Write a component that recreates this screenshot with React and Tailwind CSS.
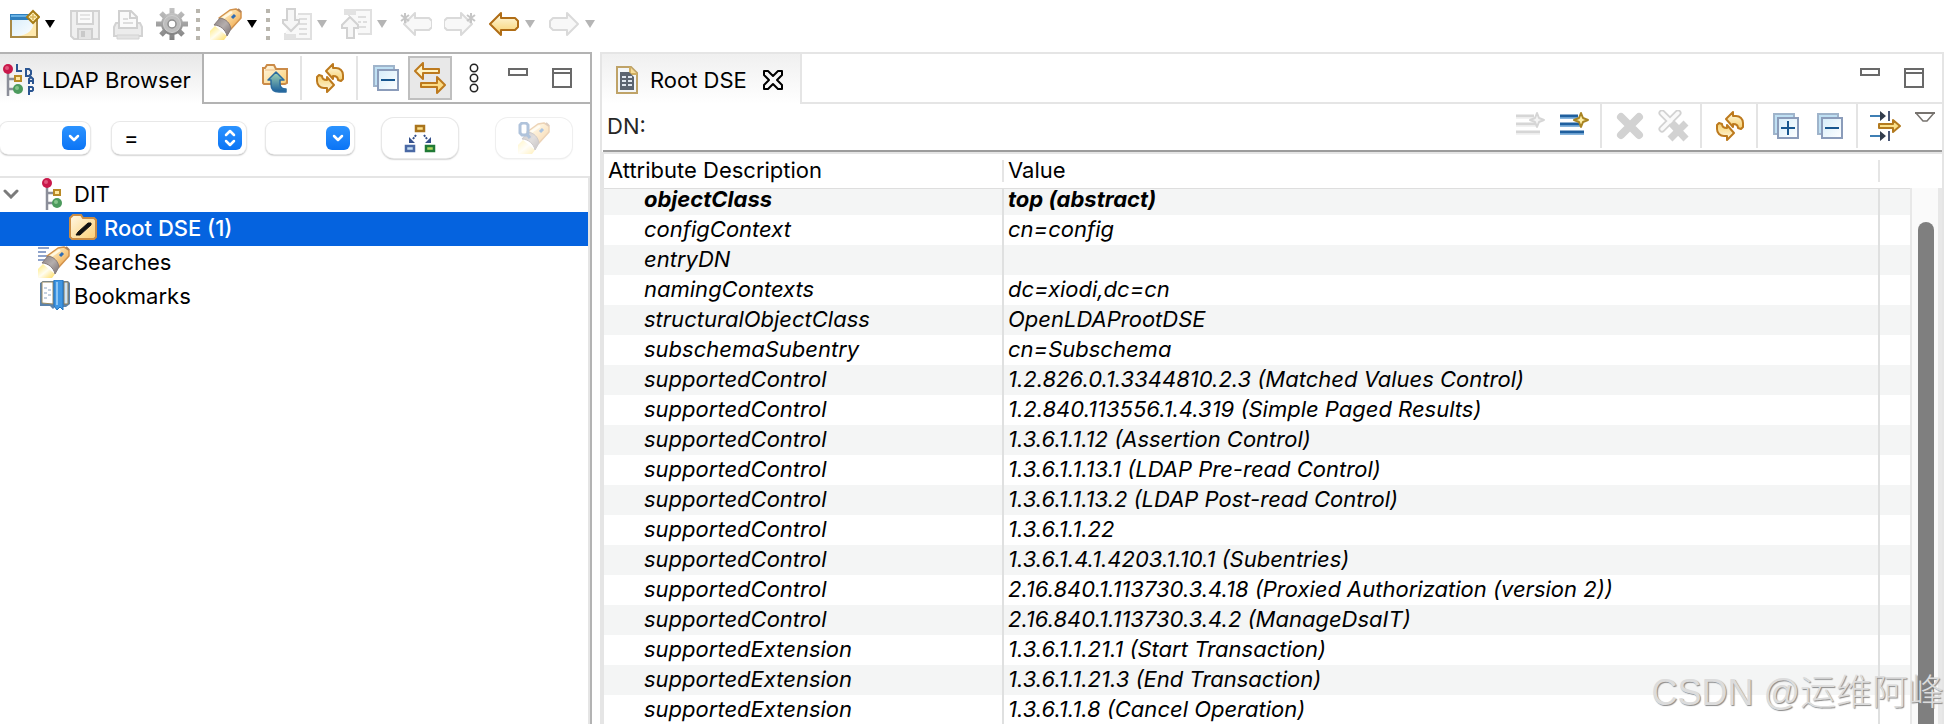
import React, { useState } from 'react';

const treeItems = [
  { id: 'dit', label: 'DIT', level: 0, open: true },
  { id: 'root', label: 'Root DSE (1)', level: 1 },
  { id: 'searches', label: 'Searches', level: 0 },
  { id: 'bookmarks', label: 'Bookmarks', level: 0 },
];

const attributes = [
  ['configContext', 'cn=config'],
  ['entryDN', ''],
  ['namingContexts', 'dc=xiodi,dc=cn'],
  ['structuralObjectClass', 'OpenLDAProotDSE'],
  ['subschemaSubentry', 'cn=Subschema'],
  ['supportedControl', '1.2.826.0.1.3344810.2.3 (Matched Values Control)'],
  ['supportedControl', '1.2.840.113556.1.4.319 (Simple Paged Results)'],
  ['supportedControl', '1.3.6.1.1.12 (Assertion Control)'],
  ['supportedControl', '1.3.6.1.1.13.1 (LDAP Pre-read Control)'],
  ['supportedControl', '1.3.6.1.1.13.2 (LDAP Post-read Control)'],
  ['supportedControl', '1.3.6.1.1.22'],
  ['supportedControl', '1.3.6.1.4.1.4203.1.10.1 (Subentries)'],
  ['supportedControl', '2.16.840.1.113730.3.4.18 (Proxied Authorization (version 2))'],
  ['supportedControl', '2.16.840.1.113730.3.4.2 (ManageDsaIT)'],
  ['supportedExtension', '1.3.6.1.1.21.1 (Start Transaction)'],
  ['supportedExtension', '1.3.6.1.1.21.3 (End Transaction)'],
  ['supportedExtension', '1.3.6.1.1.8 (Cancel Operation)'],
];

const Icon = ({ children, className = '' }) => (
  <svg viewBox="0 0 32 32" fill="none" className={`w-8 h-8 shrink-0 ${className}`} aria-hidden="true">
    {children}
  </svg>
);

// gradients shared by all the icons
const Gradients = () => (
  <svg className="absolute w-0 h-0" aria-hidden="true">
    <defs>
      <linearGradient id="gold" x1="0" y1="0" x2="0" y2="1">
        <stop offset="0" stopColor="#fffbe6" />
        <stop offset="1" stopColor="#f7cf6b" />
      </linearGradient>
      <linearGradient id="body" x1="0" y1="0" x2="1" y2="1">
        <stop offset="0.2" stopColor="#fff0c4" />
        <stop offset="0.9" stopColor="#f0a94e" />
      </linearGradient>
      <linearGradient id="beam" x1="0" y1="0" x2="1" y2="1">
        <stop offset="0" stopColor="#ffe873" />
        <stop offset="0.5" stopColor="#fffdf0" />
        <stop offset="1" stopColor="#ffdb5c" />
      </linearGradient>
      <linearGradient id="collar" x1="0" y1="0" x2="1" y2="1">
        <stop offset="0" stopColor="#8b8283" />
        <stop offset="0.5" stopColor="#b5aead" />
        <stop offset="1" stopColor="#766c6d" />
      </linearGradient>
      <linearGradient id="folder" x1="0" y1="0" x2="1" y2="1">
        <stop offset="0" stopColor="#fff8e6" />
        <stop offset="1" stopColor="#fbcf74" />
      </linearGradient>
      <linearGradient id="gray" x1="0" y1="0" x2="0" y2="1">
        <stop offset="0" stopColor="#c4c4c4" />
        <stop offset="1" stopColor="#808080" />
      </linearGradient>
      <linearGradient id="pane" x1="0" y1="0" x2="1" y2="1">
        <stop offset="0" stopColor="#d5ecfa" />
        <stop offset="1" stopColor="#ffffff" />
      </linearGradient>
      <linearGradient id="arrow" x1="0" y1="0" x2="0" y2="1">
        <stop offset="0" stopColor="#a5d8b4" />
        <stop offset="1" stopColor="#1a5f9c" />
      </linearGradient>
    </defs>
  </svg>
);

const NewIcon = () => (
  <Icon>
    <path d="M3 7h26v22H3z" fill="url(#pane)" stroke="#a98a45" strokeWidth="2" />
    <path d="M2 6h22v6H2z" fill="#2f7fbd" />
    <path d="M3 7h19v2H3z" fill="#67b1e4" />
    <path d="M10 28c10-1 15-6 16-14l2 1v13z" fill="#ffe9ae" />
    <path d="M25 3l6 6-6 6-6-6z" fill="#fff1b8" stroke="#a77d17" strokeWidth="2" />
    <path d="M25 6v6M22 9h6" stroke="#d9b45a" strokeWidth="1.5" />
  </Icon>
);

const SaveIcon = () => (
  <Icon>
    <path d="M3 3h28v28H6l-3-3z" fill="#f0f0f0" stroke="#d3d3d3" strokeWidth="2" />
    <path d="M9 3h16v13H9z" fill="#fafafa" stroke="#d3d3d3" strokeWidth="2" />
    <path d="M12 7h10M12 11h10" stroke="#dddddd" strokeWidth="1.5" />
    <path d="M10 31V21h14v10" fill="#e4e4e4" stroke="#cfcfcf" strokeWidth="2" />
    <path d="M13 23h4v6h-4z" fill="#c9c9c9" />
  </Icon>
);

const PrintIcon = () => (
  <Icon>
    <path d="M4 15h4v4h16v-4h4l2 4v9H2v-9z" fill="#ececec" stroke="#d3d3d3" strokeWidth="2" />
    <path d="M7 3h12l6 6v11H7z" fill="#fafafa" stroke="#d0d0d0" strokeWidth="2" />
    <path d="M18 3v7h7" stroke="#d0d0d0" strokeWidth="2" />
    <path d="M11 11h5M11 15h10" stroke="#dddddd" strokeWidth="2" />
    <path d="M5 27h22v4H5z" fill="#e3e3e3" stroke="#d3d3d3" />
  </Icon>
);

const GearIcon = () => (
  <Icon>
    <g stroke="url(#gray)" strokeWidth="5">
      <path d="M16.01 0l-.02 32M0 15.99l32 .02M5 5l22 22M27 5L5 27" />
    </g>
    <circle cx="16" cy="16" r="11" fill="url(#gray)" />
    <circle cx="16" cy="16" r="8.5" fill="#bdbdbd" stroke="#cfcfcf" />
    <circle cx="16" cy="16" r="4" fill="#fff" stroke="#8e8e8e" strokeWidth="1.5" />
  </Icon>
);

const TorchShape = () => (
  <>
    <path d="M0 23l5-5 12 10-3 4H0z" fill="url(#beam)" />
    <path d="M9 10L20 2l6-1 5 3v6l-10 11z" fill="url(#body)" stroke="#d2924c" strokeWidth="1.5" strokeLinejoin="round" />
    <path d="M13 10l9-6" stroke="#fff8e2" strokeWidth="2.5" />
    <path d="M28 1l3 3" stroke="#a98262" strokeWidth="2" />
    <path d="M4 17l6-7c6 1 10 5 11 11l-4 7c-1-6-7-11-13-11z" fill="url(#collar)" stroke="#857b7b" strokeLinejoin="round" />
    <path d="M22 10l3-3" stroke="#2f6db5" strokeWidth="3" />
  </>
);

const ImportIcon = ({ up }) => (
  <Icon>
    <path d={up ? 'M9 2h22v24H18M9 2v6' : 'M18 6h13v25H5v-6'} fill="#f8f8f8" stroke="#e0e0e0" strokeWidth="2" />
    <path d={up ? 'M4 1h12v6H4z' : 'M4 26h12v5H4z'} fill="#e2e2e2" />
    <path
      d={up ? 'M18 9h8M18 14h3M23 14h4M18 19h8' : 'M19 11h8M19 16h8M19 21h8M19 26h8'}
      stroke="#dedede"
      strokeWidth="2"
    />
    <path
      d={up ? 'M10 9l8 8v3h-4v10H7V20H2v-3z' : 'M7 1h8v11h4v3l-8 8-8-8v-3h4z'}
      fill="#f6f6f6"
      stroke="#d2d2d2"
      strokeWidth="2"
    />
  </Icon>
);

const ArrowIcon = ({ right, gold, star }) => (
  <Icon>
    <g transform={right ? 'translate(32 0) scale(-1 1)' : undefined}>
      <path
        d="M2 16L13 5v5h14l3 3v6l-3 3H13v5z"
        fill={gold ? 'url(#gold)' : '#f8f8f8'}
        stroke={gold ? '#b06d16' : '#dadada'}
        strokeWidth="2"
        strokeLinejoin="round"
        className={star ? 'translate-x-[2px]' : ''}
      />
      {star && <path d="M5 5v10M1 7l8 6M9 7l-8 6" stroke="#c6c6c6" strokeWidth="2" />}
    </g>
  </Icon>
);

const Caret = ({ dim }) => (
  <svg viewBox="0 0 12 8" className={`w-3 h-2 ml-1 ${dim ? 'fill-[#b5b5b5]' : 'fill-black'}`} aria-hidden="true">
    <path d="M1 0h10L6 8z" />
  </svg>
);

const Grip = () => (
  <span className="flex flex-col gap-[5px] w-1 -ml-1 -mr-0.5">
    <span className="size-1 bg-[#b9b6ae]" />
    <span className="size-1 bg-[#b9b6ae]" />
    <span className="size-1 bg-[#b9b6ae]" />
    <span className="size-1 bg-[#b9b6ae]" />
  </span>
);

const FolderUpIcon = () => (
  <Icon>
    <path d="M5 21V6h2l2-3h7l2 4h11v14l-2 1H6z" fill="url(#folder)" stroke="#cb8b48" strokeWidth="2" />
    <path d="M7 8h10" stroke="#f3cfa0" strokeWidth="1.5" />
    <path
      d="M18 10l8 8h-4v4c0 3 2 5 6 5v3h-7c-5 0-8-3-8-8v-4h-3z"
      fill="url(#arrow)"
      stroke="#2b6ca0"
      strokeWidth="1.5"
      strokeLinejoin="round"
    />
  </Icon>
);

const RefreshShape = () => (
  <path
    d="M12 9l7-7v4h3c4 0 7 3 7 7v4l-2 2-3-1c0-3-2-4-5-4v3z"
    fill="url(#gold)"
    stroke="#bd7a1e"
    strokeWidth="2"
    strokeLinejoin="round"
  />
);

const RefreshIcon = () => (
  <Icon>
    <RefreshShape />
    <g transform="rotate(180 16 16)">
      <RefreshShape />
    </g>
  </Icon>
);

const BoxesIcon = ({ plus }) => (
  <Icon>
    <path d="M4 4h20v20H4z" fill="#bfe0f3" stroke="#9fb4cb" strokeWidth="2" />
    <path d="M8 8h20v20H8z" fill="url(#pane)" stroke="#8b9cba" strokeWidth="2" />
    <path d={plus ? 'M11 18h14M18 11v14' : 'M11 18h14'} stroke="#17568f" strokeWidth="2" />
  </Icon>
);

const LinkIcon = () => (
  <Icon>
    <path d="M1 9l8-8v6h16v4H9v6z" fill="#fff3c4" stroke="#bd7a1e" strokeWidth="2" strokeLinejoin="round" />
    <path d="M31 23l-8-8v6H7v4h16v6z" fill="#fbdc86" stroke="#bd7a1e" strokeWidth="2" strokeLinejoin="round" />
  </Icon>
);

const DotsIcon = () => (
  <Icon>
    <g stroke="#222" strokeWidth="1.5">
      <circle cx="16" cy="6" r="3.7" />
      <circle cx="16" cy="16" r="3.7" />
      <circle cx="16" cy="26" r="3.7" />
    </g>
  </Icon>
);

const MinIcon = () => (
  <Icon>
    <path d="M7 7h18v6H7z" stroke="#696969" strokeWidth="2" />
  </Icon>
);

const MaxIcon = () => (
  <Icon>
    <path d="M7 7h18v18H7zM7 11h18" stroke="#696969" strokeWidth="2" />
  </Icon>
);

const DitShape = () => (
  <>
    <path d="M6 6v26M6 15h10M6 25h10" stroke="#8b8e99" strokeWidth="2.5" />
    <circle cx="6" cy="5" r="5" fill="#c9184a" />
    <circle cx="5" cy="4" r="2" fill="#e0577c" />
    <path d="M13 12h6v5h-6z" fill="#ffe9a0" stroke="#b98a26" strokeWidth="2" />
    <circle cx="16" cy="25" r="5" fill="#4c9a5d" />
    <circle cx="15" cy="24" r="2" fill="#86c48c" />
  </>
);

const LdapIcon = () => (
  <Icon>
    <DitShape />
    <g stroke="#2b5591" strokeWidth="2">
      <path d="M15 0v7h5M24 5h3l2 2v3l-2 2h-3zM27 20v-5l2-2 2 2v5M27 17h4M27 31v-8h3l1 1v2l-1 1h-3" />
    </g>
  </Icon>
);

const DitIcon = () => (
  <Icon>
    <g transform="translate(3 0)">
      <DitShape />
    </g>
  </Icon>
);

const EntryIcon = () => (
  <Icon>
    <path d="M2 25V6l3-3h8l2 3h11l2 2v17l-2 2H4z" fill="url(#folder)" stroke="#c98c45" strokeWidth="2" />
    <path d="M8 23l2-3L20 11h3v2L12 23z" fill="#111" stroke="#111" />
  </Icon>
);

const SearchesIcon = () => (
  <Icon>
    <path d="M0 2h11M0 6h8M0 10h11M0 14h7" stroke="#8fa3cb" strokeWidth="2" />
    <TorchShape />
  </Icon>
);

const BookmarksIcon = () => (
  <Icon>
    <path d="M2 3l3-2h25l2 2v21l-4 3H17l-2 2-3-3H2z" fill="#5c83ab" />
    <path d="M4 2h11v22L4 23z" fill="#fff" stroke="#9b8b62" />
    <path d="M26 2h4v22h-4z" fill="#cfe4f4" stroke="#8a7a55" />
    <path d="M6 8h3M10 10h3M6 13h3M10 15h3M6 18h3" stroke="#b3c4d8" strokeWidth="1.5" />
    <path d="M16 0h9v30l-3-3-3 3-3-4z" fill="#3d95e3" stroke="#2273bd" />
    <path d="M19 2v23" stroke="#8cc5f5" strokeWidth="2" />
  </Icon>
);

const HierarchyIcon = () => (
  <Icon>
    <path d="M12 4h8v5h-8z" fill="#ffe08a" stroke="#a9741c" strokeWidth="2.5" />
    <path d="M2 24h8v5H2z" fill="#c3dcf3" stroke="#4a69a5" strokeWidth="2.5" />
    <path d="M22 24h8v5h-8z" fill="#b0d860" stroke="#207a35" strokeWidth="2.5" />
    <path d="M12 13l-3 4M20 13l3 4" stroke="#34508c" strokeWidth="2" strokeDasharray="2 1" />
    <path d="M5 15v6h6zM27 15v6h-6z" fill="#34508c" />
  </Icon>
);

const QuickSearchIcon = () => (
  <Icon className="opacity-40">
    <TorchShape />
    <path d="M4 1h4l2 2v8l-2 2H4l-2-2V3zM8 11l4 5" stroke="#3c6ba8" strokeWidth="3" />
  </Icon>
);

const EditorIcon = () => (
  <Icon className="-mx-[5px]">
    <path d="M6 3h14l6 6v20H6z" fill="#f3f6f8" stroke="#bfa368" strokeWidth="2" />
    <path d="M19 3v7h7" fill="#f7dc97" stroke="#cfae62" strokeWidth="2" />
    <path d="M9 8h9l5 5v13H9z" fill="#5b6470" />
    <path d="M11 13h10M11 17h10M11 21h10" stroke="#dfe6ee" strokeWidth="2" strokeDasharray="4 2" />
  </Icon>
);

const CloseIcon = () => (
  <svg viewBox="0 0 20 20" className="size-5" fill="none" aria-hidden="true">
    <path
      d="M1 1h4l5 5 5-5h4v4l-5 5 5 5v4h-4l-5-5-5 5H1v-4l5-5-5-5z"
      stroke="#000"
      strokeWidth="2"
      strokeLinejoin="round"
    />
  </svg>
);

const LinesIcon = ({ dim }) => (
  <Icon>
    <path d="M2 6h18M2 14h22M2 22h24" stroke={dim ? '#d6d6d6' : '#1f5f9e'} strokeWidth="3" />
    <path d="M2 8h18M2 16h22M2 24h24" stroke={dim ? '#eeeeee' : '#5f9bcf'} strokeWidth="1.5" />
    <path
      d="M23 3l2 5 5 2-5 2-2 5-2-5-5-2 5-2z"
      fill={dim ? '#f4f4f4' : '#fff0a8'}
      stroke={dim ? '#d6d6d6' : '#a98422'}
      strokeWidth="2"
      strokeLinejoin="round"
    />
  </Icon>
);

const DeleteIcon = () => (
  <Icon>
    <path d="M7 7l18 18M25 7L7 25" stroke="#d2d2d2" strokeWidth="8" strokeLinecap="round" />
  </Icon>
);

const DeleteAllIcon = () => (
  <Icon>
    <path d="M4 3l16 16M20 3L4 19" stroke="#d2d2d2" strokeWidth="7" strokeLinecap="round" />
    <path d="M4 3l16 16M20 3L4 19" stroke="#fafafa" strokeWidth="3.5" strokeLinecap="round" />
    <path d="M13 13l15 16M28 13L12 29" stroke="#d2d2d2" strokeWidth="7" />
  </Icon>
);

const FetchIcon = () => (
  <Icon>
    <path d="M0 6h12M0 26h12" stroke="#3f7fb4" strokeWidth="2" />
    <path d="M10 1l6 5-6 5zM10 21l6 5-6 5z" fill="#333d4c" />
    <path d="M19 1v10M19 21v10" stroke="#4b5877" strokeWidth="2" />
    <path d="M9 14h14v-4l7 6-7 6v-4H9z" fill="#fbe08a" stroke="#b37a1f" strokeWidth="2" strokeLinejoin="round" />
  </Icon>
);

const MenuIcon = () => (
  <svg viewBox="0 0 20 12" className="w-5 h-3" fill="none" aria-hidden="true">
    <path d="M1 1h18l-7 8h-4z" stroke="#77736f" strokeWidth="1.5" />
    <path d="M0 1h20" stroke="#77736f" strokeWidth="2" />
  </svg>
);

const ToolButton = ({ label, active, disabled, children }) => (
  <button
    aria-label={label}
    disabled={disabled}
    className={`w-11 h-11 shrink-0 flex items-center justify-center ${
      active ? 'bg-[#e8e8e8] border-2 border-[#bfbfbf]' : ''
    }`}
  >
    {children}
  </button>
);

const Divider = () => <span className="w-0.5 h-11 ml-1 mr-1.5 bg-[#e4e4e4]" />;

const BlueCap = ({ both }) => (
  <svg
    viewBox="0 0 24 24"
    fill="none"
    stroke="#fff"
    strokeWidth="2.5"
    strokeLinecap="round"
    strokeLinejoin="round"
    className="size-6 rounded-md bg-gradient-to-b from-[#2b93ff] to-[#0a74f5]"
    aria-hidden="true"
  >
    <path d={both ? 'M8 9l4-4 4 4M8 15l4 4 4-4' : 'M8 10l4 4 4-4'} />
  </svg>
);

const Combo = ({ label, className }) => (
  <div
    className={`h-8 flex items-center pr-1 rounded-lg bg-white shadow-[0_0_0_1px_#e8e8e8,0_1px_2px_#00000080] ${className}`}
  >
    <input aria-label={label} className="w-full min-w-0 h-6 px-2 outline-none bg-transparent" />
    <button aria-label={`${label} list`}>
      <BlueCap />
    </button>
  </div>
);

const treeIcons = {
  dit: <DitIcon />,
  root: <EntryIcon />,
  searches: <SearchesIcon />,
  bookmarks: <BookmarksIcon />,
};

const MainToolbar = () => (
  <div className="h-[52px] pl-2 pb-1 flex items-center gap-3 shrink-0">
    <button aria-label="New" className="flex items-center"><NewIcon /><Caret /></button>
    <button aria-label="Save" disabled><SaveIcon /></button>
    <button aria-label="Print" disabled><PrintIcon /></button>
    <button aria-label="Settings"><GearIcon /></button>
    <Grip />
    <button aria-label="Search" className="flex items-center"><Icon><TorchShape /></Icon><Caret /></button>
    <Grip />
    <button aria-label="Next annotation" disabled className="flex items-center"><ImportIcon /><Caret dim /></button>
    <button aria-label="Previous annotation" disabled className="flex items-center"><ImportIcon up /><Caret dim /></button>
    <button aria-label="Last edit" disabled><ArrowIcon star /></button>
    <button aria-label="Next edit" disabled><ArrowIcon star right /></button>
    <button aria-label="Back" className="flex items-center"><ArrowIcon gold /><Caret dim /></button>
    <button aria-label="Forward" disabled className="flex items-center"><ArrowIcon right /><Caret dim /></button>
  </div>
);

const BrowserPanel = () => {
  const [selected, setSelected] = useState('root');
  const [operator, setOperator] = useState('=');

  return (
    <section className="w-[592px] shrink-0 flex flex-col border-t-2 border-r-2 border-[#b3b3b3]">
      <div className="h-[50px] flex">
        <h2 className="w-[204px] pl-0.5 pt-0.5 flex items-center gap-2 border-r-2 border-[#b3b3b3] bg-gradient-to-b from-[#e8e8e8] to-white whitespace-nowrap">
          <LdapIcon />
          LDAP Browser
        </h2>
        <div className="flex-1 flex items-center justify-end pr-1.5 border-b-2 border-[#b3b3b3]">
          <ToolButton label="Up to parent"><FolderUpIcon /></ToolButton>
          <Divider />
          <ToolButton label="Refresh"><RefreshIcon /></ToolButton>
          <Divider />
          <ToolButton label="Collapse all"><BoxesIcon /></ToolButton>
          <ToolButton label="Link with editor" active><LinkIcon /></ToolButton>
          <ToolButton label="View menu"><DotsIcon /></ToolButton>
          <ToolButton label="Minimize"><MinIcon /></ToolButton>
          <ToolButton label="Maximize"><MaxIcon /></ToolButton>
        </div>
      </div>

      <div className="h-[72px] pb-1 flex items-center">
        <Combo label="Attribute" className="w-[90px]" />
        <div className="w-[134px] h-8 ml-[22px] relative">
          <select
            aria-label="Operator"
            value={operator}
            onChange={(e) => setOperator(e.target.value)}
            className="appearance-none w-full h-8 pl-3 rounded-lg bg-white shadow-[0_0_0_1px_#e8e8e8,0_1px_2px_#00000080]"
          >
            <option>=</option>
            <option>~=</option>
          </select>
          <span className="absolute right-1 top-1 pointer-events-none">
            <BlueCap both />
          </span>
        </div>
        <Combo label="Value" className="w-[88px] ml-5" />
        <button
          aria-label="Search scope"
          className="w-[76px] h-10 ml-7 flex items-center justify-center rounded-xl bg-white shadow-[0_0_0_1px_#e8e8e8,0_1px_2px_#00000080]"
        >
          <HierarchyIcon />
        </button>
        <button
          aria-label="Quick search"
          disabled
          className="w-[76px] h-10 ml-[38px] flex items-center justify-center rounded-xl bg-white shadow-[0_0_0_1px_#efefef,0_1px_2px_#00000020]"
        >
          <QuickSearchIcon />
        </button>
      </div>

      <ul className="flex-1 border-t-2 border-r-2 border-[#e5e5e5]">
        {treeItems.map((item) => (
          <li key={item.id}>
            <button
              onClick={() => setSelected(item.id)}
              className={`w-full h-[34px] pb-0.5 flex items-center text-left ${
                selected === item.id ? 'bg-[#0563df] text-white font-medium' : ''
              }`}
            >
              <span className={item.level ? 'w-[68px]' : 'w-[38px] pl-[3px]'}>
                {item.open && (
                  <svg viewBox="0 0 16 10" fill="none" className="w-4" aria-hidden="true">
                    <path d="M2 2l6 6 6-6" stroke="#7b7b7b" strokeWidth="3" strokeLinecap="round" />
                  </svg>
                )}
              </span>
              {treeIcons[item.id]}
              <span className="pl-1">{item.label}</span>
            </button>
          </li>
        ))}
      </ul>
    </section>
  );
};

const EditorPanel = () => (
  <section className="flex-1 min-w-0 ml-2 mr-1 flex flex-col border-2 border-b-0 border-[#e5e5e5]">
    <div className="h-[50px] flex">
      <h2 className="w-[200px] pl-[14px] pt-0.5 flex items-center gap-3 border-r-2 border-[#e5e5e5] bg-gradient-to-b from-[#f0f0f0] to-white whitespace-nowrap">
        <EditorIcon />
        Root DSE
        <button aria-label="Close" className="ml-1"><CloseIcon /></button>
      </h2>
      <div className="flex-1 flex items-center justify-end pr-1.5 border-b-2 border-[#e5e5e5]">
        <ToolButton label="Minimize editor"><MinIcon /></ToolButton>
        <ToolButton label="Maximize editor"><MaxIcon /></ToolButton>
      </div>
    </div>

    <div className="h-12 ml-px flex border-b-2 border-[#9c9c9c]">
      <span className="flex-1 h-11 pl-1 flex items-center text-[#262626]">DN:</span>
      <ToolButton label="New value" disabled><LinesIcon dim /></ToolButton>
      <ToolButton label="New attribute"><LinesIcon /></ToolButton>
      <Divider />
      <ToolButton label="Delete value" disabled><DeleteIcon /></ToolButton>
      <ToolButton label="Delete all values" disabled><DeleteAllIcon /></ToolButton>
      <Divider />
      <ToolButton label="Refresh attributes"><RefreshIcon /></ToolButton>
      <Divider />
      <ToolButton label="Expand all"><BoxesIcon plus /></ToolButton>
      <ToolButton label="Collapse attributes"><BoxesIcon /></ToolButton>
      <Divider />
      <ToolButton label="Fetch operational attributes"><FetchIcon /></ToolButton>
      <button aria-label="Menu" className="w-[34px] pt-2 flex items-start justify-center"><MenuIcon /></button>
    </div>

    <div className="flex-1 flex border-t-2 border-l-2 border-[#e5e5e5]">
      <div className="flex-1 min-w-0">
        <table className="w-full table-fixed border-collapse text-left whitespace-nowrap">
          <colgroup>
            <col className="w-[400px]" />
            <col />
            <col className="w-[30px]" />
          </colgroup>
          <thead>
            <tr className="h-[34px] border-b border-[#dedede]">
              <th className="p-0 font-normal">
                <div className="h-[22px] pl-1 leading-5 border-r-2 border-[#e5e5e5]">Attribute Description</div>
              </th>
              <th className="p-0 font-normal">
                <div className="h-[22px] pl-1 leading-5 border-r-2 border-[#e5e5e5]">Value</div>
              </th>
              <th className="p-0" />
            </tr>
          </thead>
          <tbody className="italic">
            {/* first row is scrolled partly under the header */}
            <tr className="h-[26px] bg-[#f4f5f5] font-bold leading-5">
              <td className="p-0 align-top"><div className="h-[26px] pl-10 border-r-2 border-[#dfe0e0]">objectClass</div></td>
              <td className="p-0 align-top"><div className="h-[26px] pl-1 border-r-2 border-[#dfe0e0]">top (abstract)</div></td>
              <td className="p-0" />
            </tr>
            {attributes.map(([name, value], i) => (
              <tr key={i} className="h-[30px] leading-7 even:bg-white odd:bg-[#f4f5f5]">
                <td className="p-0"><div className="h-[30px] pl-10 border-r-2 border-[#dfe0e0]">{name}</div></td>
                <td className="p-0"><div className="h-[30px] pl-1 border-r-2 border-[#dfe0e0]">{value}</div></td>
                <td className="p-0" />
              </tr>
            ))}
          </tbody>
        </table>
      </div>
      <div className="w-8 pt-[34px] flex flex-col">
        <div className="flex-1 pt-[34px] pl-1.5 flex flex-col bg-[#fafafa] border-l-2 border-r-4 border-[#e8e8e8]">
          <div className="flex-1 w-4 rounded-t-full bg-[#7f7f7f]" />
        </div>
      </div>
    </div>
  </section>
);

const App = () => (
  <div className="relative min-h-screen flex flex-col overflow-hidden bg-white text-black text-[22px] leading-7 font-['Inter',sans-serif]">
    <Gradients />
    <MainToolbar />
    <main className="flex-1 flex">
      <BrowserPanel />
      <EditorPanel />
    </main>
    <div className="absolute right-1 bottom-2 text-[36px] leading-[48px] font-light text-[#dcdcdc] [text-shadow:1px_1px_1px_#8a8a8a] whitespace-nowrap font-['Liberation_Sans','Noto_Sans_CJK_SC',sans-serif]">
      CSDN @运维阿峰
    </div>
  </div>
);

export default App;
